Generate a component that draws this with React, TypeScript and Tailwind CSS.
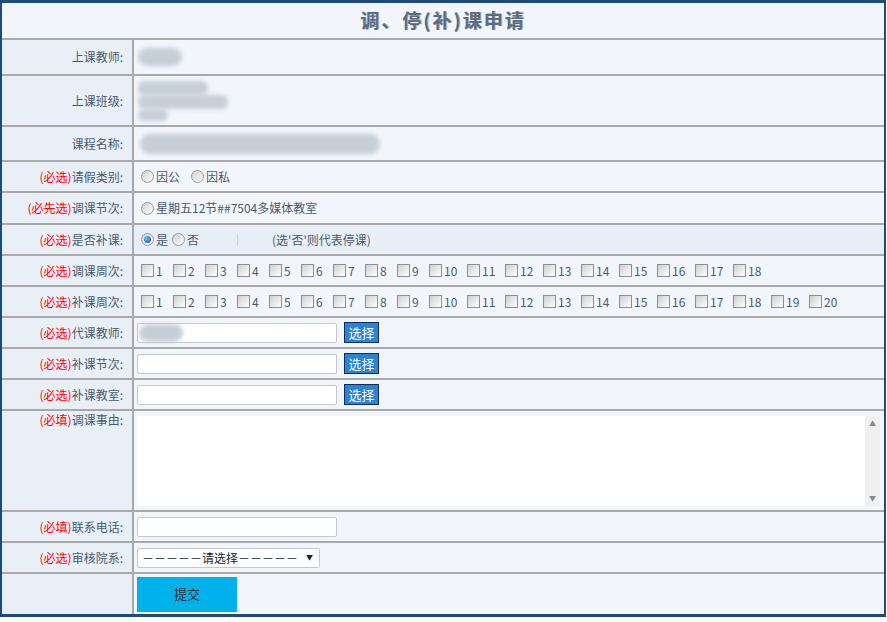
const weeksA = Array.from({ length: 18 }, (_, i) => i + 1);
const weeksB = Array.from({ length: 20 }, (_, i) => i + 1);

const Req = ({ t = '必选' }: { t?: string }) => <span className="text-[#ff0000]">({t})</span>;

const Radio = ({ on = false }: { on?: boolean }) => (
    <span className="inline-flex h-[13px] w-[13px] items-center justify-center rounded-full border border-[#9a9a9a] bg-gradient-to-br from-[#d0d0d0] to-[#ffffff]">
        {on && <span className="h-[7px] w-[7px] rounded-full bg-[radial-gradient(circle_at_35%_35%,#6cc3ff,#0a4f8f)]" />}
    </span>
);

const Box = () => (
    <span className="inline-block h-[13px] w-[13px] border border-[#8f8f8f] bg-gradient-to-br from-[#cfcfcf] to-[#ffffff]" />
);

const Weeks = ({ list }: { list: number[] }) => (
    <div className="flex items-center pl-[7px]">
        {list.map(n => (
            <span key={n} className={'flex items-center gap-[2px] ' + (n < 10 ? 'w-[32px]' : 'w-[38px]')}>
                <Box />
                <span className="text-[12px] text-[#4a5a70]">{n}</span>
            </span>
        ))}
    </div>
);

const Input = ({ w = 'w-[200px]', children }: { w?: string; children?: React.ReactNode }) => (
    <div className={'relative h-[20px] rounded-[2px] border border-[#c4c8ce] bg-white ' + w}>{children}</div>
);

const Pick = () => (
    <button className="ml-[7px] h-[21px] w-[35px] border border-[#0e2d57] bg-[#2b82d6] text-[13px] leading-none text-white">选择</button>
);

const Blur = ({ cls }: { cls: string }) => <div className={'rounded-full bg-[#c6ced7] blur-[2px] ' + cls} />;

const Row = ({ h, label, top = false, alt = false, last = false, children }: { h: string; label?: React.ReactNode; top?: boolean; alt?: boolean; last?: boolean; children?: React.ReactNode }) => (
    <div className={'flex ' + h + (last ? '' : ' border-b-2 border-[#a9a9a9]')}>
        <div className={'flex w-[132px] shrink-0 justify-end border-r-2 border-[#a9a9a9] bg-[#e9eff6] pr-[9px] ' + (top ? 'items-start' : 'items-center')}>
            <span className="text-[12px] text-[#4a5a70]">{label}</span>
        </div>
        <div className={'flex flex-1 items-center ' + (alt ? 'bg-[#e8eef5]' : 'bg-[#f2f6fb]')}>{children}</div>
    </div>
);

export default function App() {
    return (
        <div className="h-[622px] w-[887px] bg-white font-['Noto_Sans_CJK_SC',sans-serif]">
            <div className="w-[886px] border-x-2 border-b-[3px] border-t-[3px] border-[#1f4a7c]">
                <div className="flex h-[37px] items-center justify-center border-b-2 border-[#a9a9a9] bg-[#f2f6fb]">
                    <span className="text-[19px] font-bold tracking-[2px] text-[#5b6c80] [text-shadow:1px_0_0_#9bb2cc]">调、停(补)课申请</span>
                </div>

                <Row h="h-[36px]" label="上课教师:">
                    <div className="flex pl-[4px]">
                        <Blur cls="h-[18px] w-[44px]" />
                    </div>
                </Row>
                <Row h="h-[51px]" label="上课班级:">
                    <div className="flex flex-col pl-[4px]">
                        <Blur cls="h-[14px] w-[70px] rounded-md" />
                        <Blur cls="h-[14px] w-[90px] rounded-md" />
                        <Blur cls="h-[12px] w-[30px] rounded-md" />
                    </div>
                </Row>
                <Row h="h-[35px]" label="课程名称:">
                    <div className="flex pl-[6px]">
                        <Blur cls="h-[20px] w-[240px]" />
                    </div>
                </Row>
                <Row h="h-[31px]" label={<><Req />请假类别:</>}>
                    <div className="flex items-center pl-[7px] text-[12px] text-[#4a5a70]">
                        <Radio /><span className="ml-[2px] mr-[11px]">因公</span>
                        <Radio /><span className="ml-[2px]">因私</span>
                    </div>
                </Row>
                <Row h="h-[32px]" label={<><Req t="必先选" />调课节次:</>}>
                    <div className="flex items-center pl-[7px] text-[12px] text-[#4a5a70]">
                        <Radio /><span className="ml-[2px]">星期五12节##7504多媒体教室</span>
                    </div>
                </Row>
                <Row h="h-[31px]" alt label={<><Req />是否补课:</>}>
                    <div className="flex items-center pl-[7px] text-[12px] text-[#4a5a70]">
                        <Radio on /><span className="ml-[2px] mr-[4px]">是</span>
                        <Radio /><span className="ml-[2px]">否</span>
                        <span className="ml-[38px] h-[12px] w-px bg-[#c9d2dc]" />
                        <span className="ml-[34px]">(选'否'则代表停课)</span>
                    </div>
                </Row>
                <Row h="h-[31px]" label={<><Req />调课周次:</>}>
                    <Weeks list={weeksA} />
                </Row>
                <Row h="h-[31px]" label={<><Req />补课周次:</>}>
                    <Weeks list={weeksB} />
                </Row>
                <Row h="h-[31px]" label={<><Req />代课教师:</>}>
                    <div className="flex items-center pl-[3px]">
                        <Input>
                            <div className="flex h-full items-center pl-[1px]">
                                <Blur cls="h-[18px] w-[44px]" />
                            </div>
                        </Input>
                        <Pick />
                    </div>
                </Row>
                <Row h="h-[31px]" label={<><Req />补课节次:</>}>
                    <div className="flex items-center pl-[3px]">
                        <Input />
                        <Pick />
                    </div>
                </Row>
                <Row h="h-[31px]" label={<><Req />补课教室:</>}>
                    <div className="flex items-center pl-[3px]">
                        <Input />
                        <Pick />
                    </div>
                </Row>
                <Row h="h-[101px]" top label={<><Req t="必填" />调课事由:</>}>
                    <div className="flex h-[90px] flex-1 pl-[3px] pr-[4px]">
                        <textarea className="h-full flex-1 resize-none bg-white outline-none" />
                        <div className="flex h-full w-[15px] flex-col items-center justify-between bg-[#f0f0f0] py-[4px] text-[7px] leading-none text-[#8a8a8a]">
                            <span>▲</span>
                            <span>▼</span>
                        </div>
                    </div>
                </Row>
                <Row h="h-[31px]" label={<><Req t="必填" />联系电话:</>}>
                    <div className="flex items-center pl-[3px]">
                        <Input />
                    </div>
                </Row>
                <Row h="h-[31px]" label={<><Req />审核院系:</>}>
                    <div className="flex items-center pl-[3px]">
                        <div className="flex h-[20px] w-[183px] items-center justify-between rounded-[2px] border border-[#c4c8ce] bg-white pl-[4px] pr-[6px] text-[12px] text-[#222]">
                            <span className="whitespace-nowrap">－－－－－请选择－－－－－</span>
                            <span className="text-[7px]">▼</span>
                        </div>
                    </div>
                </Row>
                <Row h="h-[40px]" last>
                    <div className="flex items-center pl-[3px]">
                        <button className="h-[35px] w-[100px] bg-[#00b2ec] text-[13px] text-[#333]">提交</button>
                    </div>
                </Row>
            </div>
        </div>
    );
}
